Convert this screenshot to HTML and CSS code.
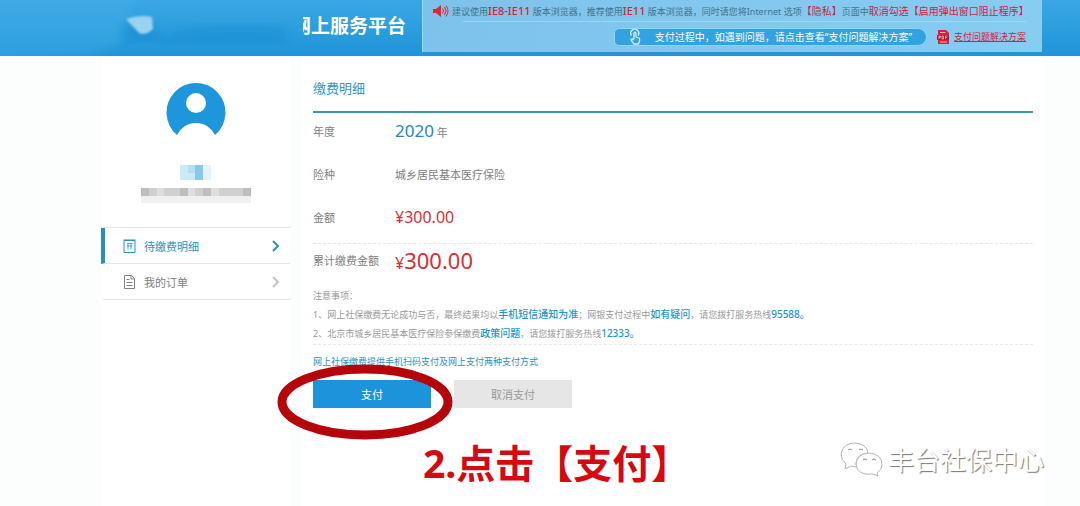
FILE: index.html
```
<!DOCTYPE html>
<html lang="zh-CN">
<head>
    <meta charset="UTF-8">
    <meta name="viewport" content="width=device-width, initial-scale=1.0">
    <title>网上服务平台 - 缴费明细</title>
    <link rel="stylesheet" href="styles.css">
</head>
<body>
    <header class="header">
        <div class="brand">
            <h1>网上服务平台</h1>
            <svg class="brand-mask" width="303" height="56" viewBox="0 0 303 56" aria-hidden="true">
                <defs>
                    <linearGradient id="sky" x1="0" y1="0" x2="0" y2="1">
                        <stop offset="0" stop-color="#3aa7e4"/>
                        <stop offset="1" stop-color="#1f95d7"/>
                    </linearGradient>
                    <filter id="soft"><feGaussianBlur stdDeviation="1"/></filter>
                    <filter id="softer"><feGaussianBlur stdDeviation="4"/></filter>
                </defs>
                <rect width="303" height="56" fill="url(#sky)"/>
                <path d="M-20 -20H140L118 46L90 54L-20 64Z" fill="#45afe8" opacity="0.4" filter="url(#softer)"/>
                <path d="M172 32Q220 22 284 28L290 44H160Z" fill="#148dd1" opacity="0.5" filter="url(#softer)"/>
                <path d="M122 24L130 42L164 41L154 28Z" fill="#1385cf" opacity="0.5" filter="url(#softer)"/>
                <path d="M126 19Q140 14 152 17L153 29Q146 36 139 33Z" fill="#9ad2ef" filter="url(#soft)"/>
            </svg>
        </div>
        <div class="notice">
            <p class="notice-row">
                <svg class="speaker" width="16" height="12" viewBox="0 0 16 12" aria-hidden="true">
                    <path d="M0 4H3L8 0V12L3 8H0Z" fill="#e8232f"/>
                    <path d="M9.500 3.500Q11.500 6 9.500 8.500M11.500 2Q14.500 6 11.500 10M13 0.500Q17 6 13 11.500" fill="none" stroke="#e8232f"/>
                </svg>
                <span>建议使用<b class="ie">IE8-IE11</b> 版本浏览器，推荐使用<b class="ie">IE11</b> 版本浏览器，同时请您将Internet 选项<em>【隐私】</em>页面中<em>取消勾选【启用弹出窗口阻止程序】</em></span>
            </p>
            <div class="notice-row help">
                <div class="pill">
                    <svg width="12" height="16" viewBox="0 0 12 16" fill="none" stroke="#d5efff" stroke-width="1.300" aria-hidden="true">
                        <path d="M2.500 6.500A4 4 0 1 1 9 6.500M5 10V4Q6 2.500 7 4V8L10 9Q11 10 10.500 12L9.500 15H5L2 11Q2 9 5 11"/>
                    </svg>
                    <span>支付过程中，如遇到问题，请点击查看“支付问题解决方案”</span>
                </div>
                <a class="pdf" href="#">
                    <svg width="12" height="14" viewBox="0 0 12 14" aria-hidden="true">
                        <path d="M1 0H9L12 3V14H1Z" fill="#dc1f35"/>
                        <path d="M3 2.500H8.500M3 12H10" stroke="#f3b7c4"/>
                        <path d="M0 5H12V10H0Z" fill="#c4132b"/>
                        <path d="M2 9V6H3.500V7.500H2M5 6V9H6.500V6ZM8.500 9V6H10.500M8.500 7.500H10" fill="none" stroke="#f7c5cf" stroke-width="0.700"/>
                    </svg>
                    <span>支付问题解决方案</span>
                </a>
            </div>
        </div>
    </header>

    <div class="page">
        <aside class="sidebar">
            <svg class="avatar" width="60" height="56" viewBox="0 0 60 56" aria-hidden="true">
                <path d="M11 53A29.500 29.500 0 1 1 49 53A21 21 0 0 0 11 53Z" fill="#1e96dc"/>
                <circle cx="30" cy="21" r="10" fill="#fff"/>
            </svg>
            <!-- Masked name and ID number -->
            <svg class="masked" width="110" height="40" viewBox="0 0 110 40" aria-hidden="true">
                <path d="M39 1H54V16H39Z" fill="#cce9f8"/>
                <path d="M47 1H54V9H47Z" fill="#b5def4"/>
                <path d="M54 1H62V16H54Z" fill="#8cc7e9"/>
                <path d="M62 1H70V16H62Z" fill="#e2f3fc"/>
                <path d="M0 24H110V32H0Z" fill="#d0d0d0"/>
                <path d="M0 24H8V32H0ZM39 24H47V32H39ZM62 24H70V32H62ZM102 24H110V32H102Z" fill="#bebebe"/>
                <path d="M16 24H23V32H16ZM47 24H54V32H47ZM70 24H78V32H70Z" fill="#dfdfdf"/>
                <path d="M0 32H110V39H0Z" fill="#f0f0f0"/>
            </svg>
            <nav class="menu">
                <a class="active" href="#">
                    <svg width="13" height="14" viewBox="0 0 13 14" fill="none" stroke="currentColor" aria-hidden="true">
                        <path d="M1 1.500H12V13.500H1ZM0.500 1H12.500"/>
                        <path d="M4 4.500H9.500M4 7H9.500M5 4.500V10.500M8 4.500V10.500" stroke-width="0.800"/>
                    </svg>
                    <span>待缴费明细</span>
                    <svg class="arrow" width="8" height="12" viewBox="0 0 8 12" aria-hidden="true"><path d="M1 1L6 6L1 11"/></svg>
                </a>
                <a href="#">
                    <svg width="13" height="14" viewBox="0 0 13 14" fill="none" stroke="currentColor" aria-hidden="true">
                        <path d="M1.500 0.500H8.500L11.500 3.500V13.500H1.500ZM8 1V4H11M3.500 4.500H6.500M3.500 7.500H9.500M3.500 10.500H9.500"/>
                    </svg>
                    <span>我的订单</span>
                    <svg class="arrow" width="8" height="12" viewBox="0 0 8 12" aria-hidden="true"><path d="M1 1L6 6L1 11"/></svg>
                </a>
            </nav>
        </aside>

        <main class="content">
            <h2>缴费明细</h2>
            <dl class="details">
                <div><dt>年度</dt><dd><span class="year">2020</span> 年</dd></div>
                <div><dt>险种</dt><dd>城乡居民基本医疗保险</dd></div>
                <div><dt>金额</dt><dd class="money">¥300.00</dd></div>
            </dl>
            <dl class="total">
                <dt>累计缴费金额</dt><dd class="money">¥<span class="sum">300.00</span></dd>
            </dl>
            <div class="tips">
                <p>注意事项：</p>
                <p>1、网上社保缴费无论成功与否，最终结果均以<b>手机短信通知为准</b>；网银支付过程中<b>如有疑问</b>，请您拨打服务热线<span class="phone">95588。</span></p>
                <p>2、北京市城乡居民基本医疗保险参保缴费<b>政策问题</b>，请您拨打服务热线<span class="phone">12333。</span></p>
            </div>
            <p class="methods">网上社保缴费提供手机扫码支付及网上支付两种支付方式</p>
            <div class="actions">
                <button type="button" class="pay">支付</button>
                <button type="button" class="cancel">取消支付</button>
                <svg class="ring" width="176" height="76" viewBox="0 0 176 76" aria-hidden="true">
                    <ellipse cx="88" cy="38" rx="83" ry="33" fill="none" stroke="#b5050b" stroke-width="9"/>
                </svg>
            </div>
        </main>
    </div>

    <p class="step">2.点击【支付】</p>

    <div class="watermark">
        <svg width="44" height="36" viewBox="0 0 44 36" fill="#fff" stroke="#b5b5b5" aria-hidden="true">
            <path d="M6 22Q1 18 1 12Q3 1 15 1Q27 2 28 11Q17 12 16 21Q16 24 17 25L11 24L5 27Z"/>
            <path d="M29 11Q42 12 42 23Q42 28 37 31L38 34L33 32Q17 34 16 22Q17 12 29 11Z"/>
            <path d="M8 8Q10 6 12 8M19 8Q21 6 23 8M23 18Q25 16 27 18M32 18Q34 16 36 18" fill="none" stroke="#8c8c8c"/>
        </svg>
        <span>丰台社保中心</span>
    </div>
</body>
</html>
```
FILE: styles.css
```
* {
    box-sizing: border-box;
}

body {
    margin: 0;
    font-family: "Noto Sans", "Noto Sans CJK SC", sans-serif;
    font-size: 11px;
    color: #808080;
    background-color: #fbfefd;
    position: relative;
    min-height: 100vh;
    display: flex;
    flex-direction: column;
}

h1, h2, p, dl, dd {
    margin: 0;
}

a {
    color: inherit;
    text-decoration: none;
}

svg {
    flex-shrink: 0;
}

/* Header */
.header {
    display: flex;
    justify-content: space-between;
    align-items: flex-start;
    height: 56px;
    padding-right: 38px;
    background: linear-gradient(#3aa7e4, #1f95d7);
}

.brand {
    position: relative;
    padding: 12px 0 0 292px;
}

.brand h1 {
    font-size: 19px;
    line-height: 28px;
    color: #fff;
    white-space: nowrap;
}

.brand-mask {
    position: absolute;
    left: 0;
    top: 0;
}

.notice {
    width: 620px;
    height: 52px;
    padding: 0 16px 0 10px;
    background: linear-gradient(100deg, #7dc2eb, #86cdf2);
    border-left: 1px solid #9bd6f5;
}

.notice-row {
    display: flex;
    align-items: center;
    gap: 3px;
    height: 21px;
    font-size: 9px;
    color: #47718a;
    white-space: nowrap;
}

.notice em {
    font-style: normal;
    font-size: 10px;
    color: #d32238;
}

.notice .ie {
    font-size: 11px;
    font-weight: 500;
    color: #d8223a;
}

.help {
    justify-content: flex-end;
    gap: 10px;
    height: 30px;
    margin-left: 30px;
    border-top: 1px solid #9bd8f5;
}

.pill {
    display: flex;
    align-items: center;
    gap: 14px;
    height: 18px;
    padding: 0 14px;
    font-size: 10px;
    color: #fff;
    background-color: #33a2e1;
    border: 1px solid #8ed7f8;
    border-radius: 5px 9px 9px 5px;
}

.pdf {
    display: flex;
    align-items: center;
    gap: 5px;
    color: #d32238;
}

.pdf span {
    text-decoration: underline;
}

/* Page */
.page {
    flex: 1;
    display: flex;
    gap: 12px;
    margin: 0 35px 0 101px;
}

.sidebar {
    width: 189px;
    padding-top: 26px;
    background-color: #fff;
    display: flex;
    flex-direction: column;
    align-items: center;
}

.masked {
    margin: 26px 0 23px;
}

.menu {
    width: 100%;
    border-top: 1px solid #e6e6e6;
}

.menu a {
    display: flex;
    align-items: center;
    gap: 8px;
    height: 36px;
    padding: 0 10px 0 18px;
    border-left: 4px solid transparent;
    border-bottom: 1px solid #e6e6e6;
}

.menu .active {
    color: #2a91c4;
    border-left-color: #2a8fb8;
}

.arrow {
    margin-left: auto;
    fill: none;
    stroke: #c4c4c4;
    stroke-width: 2;
}

.active .arrow {
    stroke: #2a8fb8;
}

.content {
    flex: 1;
    padding: 20px 12px 0 11px;
    background-color: #fff;
}

.content h2 {
    height: 37px;
    font-size: 13px;
    font-weight: 400;
    line-height: 24px;
    color: #2f97cc;
    border-bottom: 2px solid #3b93c0;
}

.details {
    display: grid;
    gap: 8px;
    padding-bottom: 9px;
    border-bottom: 1px dashed #e8e8e8;
}

.details div,
.total {
    display: flex;
    align-items: center;
    height: 35px;
}

.total {
    height: 32px;
}

.content dt {
    width: 82px;
}

.year {
    font-size: 17px;
    color: #2586c0;
}

.content .money {
    font-size: 16px;
    color: #d63031;
}

.content .sum {
    font-size: 22px;
}

.tips {
    padding: 10px 0 1px;
    font-size: 9px;
    line-height: 19px;
    color: #999;
    border-bottom: 1px dashed #e8e8e8;
}

.tips b,
.tips .phone {
    font-size: 10px;
    font-weight: 500;
    color: #2395d0;
}

.methods {
    margin: 8px 0 9px;
    font-size: 9px;
    line-height: 18px;
    color: #2a91c4;
}

.actions {
    position: relative;
    display: flex;
    gap: 23px;
}

.actions button {
    width: 118px;
    height: 28px;
    padding: 0;
    border: none;
    font-family: inherit;
    font-size: 11px;
    cursor: pointer;
}

.actions .pay {
    color: #fff;
    background-color: #1c93da;
}

.actions .cancel {
    color: #999;
    background-color: #e6e6e6;
}

/* Annotations over the page */
.ring {
    position: absolute;
    left: -36px;
    top: -16px;
    pointer-events: none;
}

.step {
    position: absolute;
    left: 423px;
    top: 435px;
    font-size: 39px;
    font-weight: 700;
    line-height: 56px;
    color: #d40a10;
}

.watermark {
    position: absolute;
    right: 36px;
    bottom: 28px;
    display: flex;
    align-items: center;
    gap: 4px;
    font-size: 26px;
    line-height: 36px;
    color: #fff;
    text-shadow: 1px 1px 1px #777;
}
```
